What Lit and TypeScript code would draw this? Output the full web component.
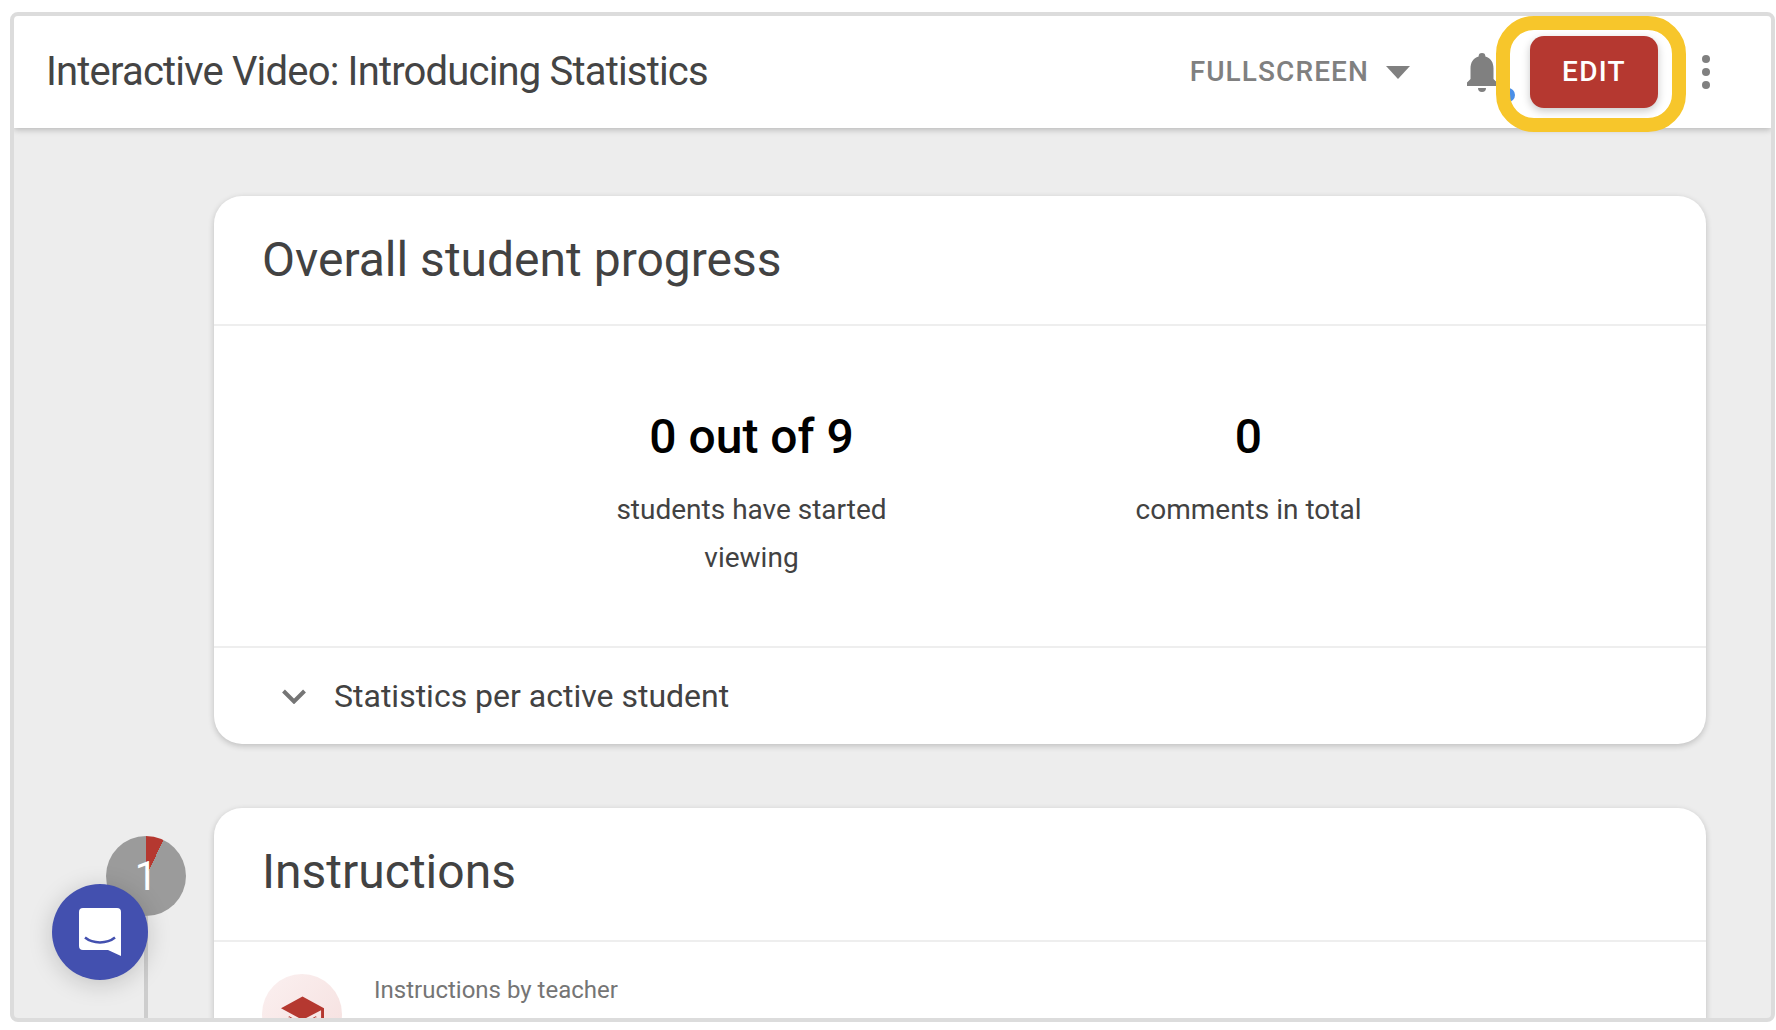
import { LitElement, html, css } from "lit";
import { customElement } from "lit/decorators.js";

@customElement("app-root")
export class AppRoot extends LitElement {
  static styles = css`
    :host { display: block; height: 1030px; background: #fff; font-family: Roboto, "Liberation Sans", sans-serif; overflow: hidden; }
    * { box-sizing: border-box; }
    .frame { position: relative; width: 1765px; height: 1010px; margin: 12px 0 0 10px; border: 4px solid #dcdcdc; border-radius: 8px; background: #ededed; overflow: hidden; }
    .bar { position: relative; z-index: 2; height: 112px; background: #fff; box-shadow: 0 2px 6px rgba(0,0,0,.22); display: flex; align-items: center; padding: 0 61px 0 32px; }
    .title { flex: 1; font-size: 40px; color: #444; letter-spacing: -.82px; white-space: nowrap; padding-bottom: 1px; }
    .fs { display: flex; align-items: center; font-size: 28px; font-weight: 500; letter-spacing: 1.1px; color: #808080; gap: 17px; }
    .fs span { padding-bottom: 2px; }
    .bell { position: relative; width: 32px; height: 40px; margin-left: 56px; }
    .bell svg { display: block; }
    .dot { position: absolute; left: 35px; top: 36px; width: 14px; height: 14px; border-radius: 50%; background: #4a8fe8; }
    .edit { margin-left: 32px; width: 128px; height: 72px; padding-bottom: 2px; border-radius: 14px; background: #b53830; color: #fff; font-size: 28px; font-weight: 500; letter-spacing: 1.3px; display: flex; align-items: center; justify-content: center; box-shadow: 0 3px 8px rgba(0,0,0,.22); }
    .kebab { margin-left: 44px; display: flex; flex-direction: column; gap: 5px; }
    .kebab i { display: block; width: 8px; height: 8px; border-radius: 50%; background: #808080; }
    .ring { position: absolute; z-index: 3; left: 1482px; top: 0; width: 190px; height: 116px; border: 14px solid #f7c62b; border-radius: 38px; }
    .main { display: flex; flex-direction: column; gap: 64px; padding: 68px 65px 0 200px; }
    .card { background: #fff; border-radius: 28px; box-shadow: 0 2px 6px rgba(0,0,0,.2); flex: none; }
    .head { padding: 0 48px 2px; height: 130px; display: flex; align-items: center; font-size: 48px; color: #424242; border-bottom: 2px solid #eee; }
    .head.inst { height: 134px; padding-bottom: 6px; }
    .stats { display: flex; justify-content: center; height: 322px; padding: 81px 0 0 80px; border-bottom: 2px solid #eee; }
    .stat { width: 497px; text-align: center; }
    .stat b { display: block; font-size: 48px; line-height: 60px; font-weight: 500; color: #000; margin-bottom: 19px; }
    .stat span { display: block; font-size: 28px; line-height: 48px; color: #424242; padding: 0 90px; }
    .expand { display: flex; align-items: center; height: 96px; padding-left: 68px; gap: 28px; font-size: 32px; color: #424242; }
    .body { display: flex; gap: 32px; padding: 32px 48px 0; height: 300px; }
    .avatar { width: 80px; height: 80px; border-radius: 50%; background: linear-gradient(135deg, #fbf0f0, #f5dfde); display: flex; justify-content: center; padding-top: 22px; }
    .by { font-size: 24px; color: #757575; margin-top: 2px; }
    .line { position: absolute; left: 130px; top: 900px; width: 4px; height: 110px; background: #cdcdcd; }
    .pie { position: absolute; left: 92px; top: 820px; width: 80px; height: 80px; border-radius: 50%; background: conic-gradient(#b53830 0 26deg, #9b9b9b 26deg 360deg); color: #fff; font-size: 40px; font-weight: 400; display: flex; align-items: center; justify-content: center; }
    .fab { position: absolute; z-index: 4; left: 38px; top: 868px; width: 96px; height: 96px; border-radius: 50%; background: #4350af; box-shadow: 0 4px 24px rgba(0,0,0,.18); display: flex; align-items: center; justify-content: center; }
  `;

  render() {
    return html`
      <div class="frame">
        <header class="bar">
          <div class="title">Interactive Video: Introducing Statistics</div>
          <div class="fs"><span>FULLSCREEN</span>
            <svg width="24" height="13" viewBox="0 0 24 13"><path d="M0 0h24L12 13z" fill="#808080"/></svg>
          </div>
          <div class="bell">
            <svg width="32" height="40" viewBox="0 0 32 40"><path fill="#808080" d="M16 1a3.400 3.400 0 0 1 3.400 3.400C25 6 27.500 10.500 27.500 16.500V27L31 30.500V34H1v-3.500L4.500 27V16.500C4.500 10.500 7 6 12.600 4.400A3.400 3.400 0 0 1 16 1zM12 36h8a4 4 0 0 1-4 4 4 4 0 0 1-4-4z"/></svg>
            <span class="dot"></span>
          </div>
          <div class="edit">EDIT</div>
          <div class="kebab"><i></i><i></i><i></i></div>
        </header>
        <div class="ring"></div>
        <main class="main">
          <section class="card">
            <div class="head">Overall student progress</div>
            <div class="stats">
              <div class="stat"><b>0 out of 9</b><span>students have started viewing</span></div>
              <div class="stat"><b>0</b><span>comments in total</span></div>
            </div>
            <div class="expand">
              <svg width="24" height="15" viewBox="0 0 24 15"><path d="M1.500 2L12 12.500 22.500 2" fill="none" stroke="#757575" stroke-width="4"/></svg>
              Statistics per active student
            </div>
          </section>
          <section class="card">
            <div class="head inst">Instructions</div>
            <div class="body">
              <div class="avatar">
                <svg width="43" height="40" viewBox="0 0 44 40"><path fill="#b53830" d="M22 0l22 12v26h-3V14L22 24 0 12z"/><path fill="#b53830" d="M8 20l14 8 14-8v14H8z"/><path d="M8 22l14 10 14-10" fill="none" stroke="#fff" stroke-width="2"/></svg>
              </div>
              <div class="by">Instructions by teacher</div>
            </div>
          </section>
        </main>
        <div class="line"></div>
        <div class="pie">1</div>
        <div class="fab">
          <svg width="42" height="48" viewBox="0 0 42 48"><path fill="#fff" d="M4 0h34a4 4 0 0 1 4 4v44l-13-6H4a4 4 0 0 1-4-4V4a4 4 0 0 1 4-4z"/><path d="M6 29.500c8 6.500 22 6.500 30 0" fill="none" stroke="#4350af" stroke-width="2.500"/></svg>
        </div>
      </div>
    `;
  }
}
